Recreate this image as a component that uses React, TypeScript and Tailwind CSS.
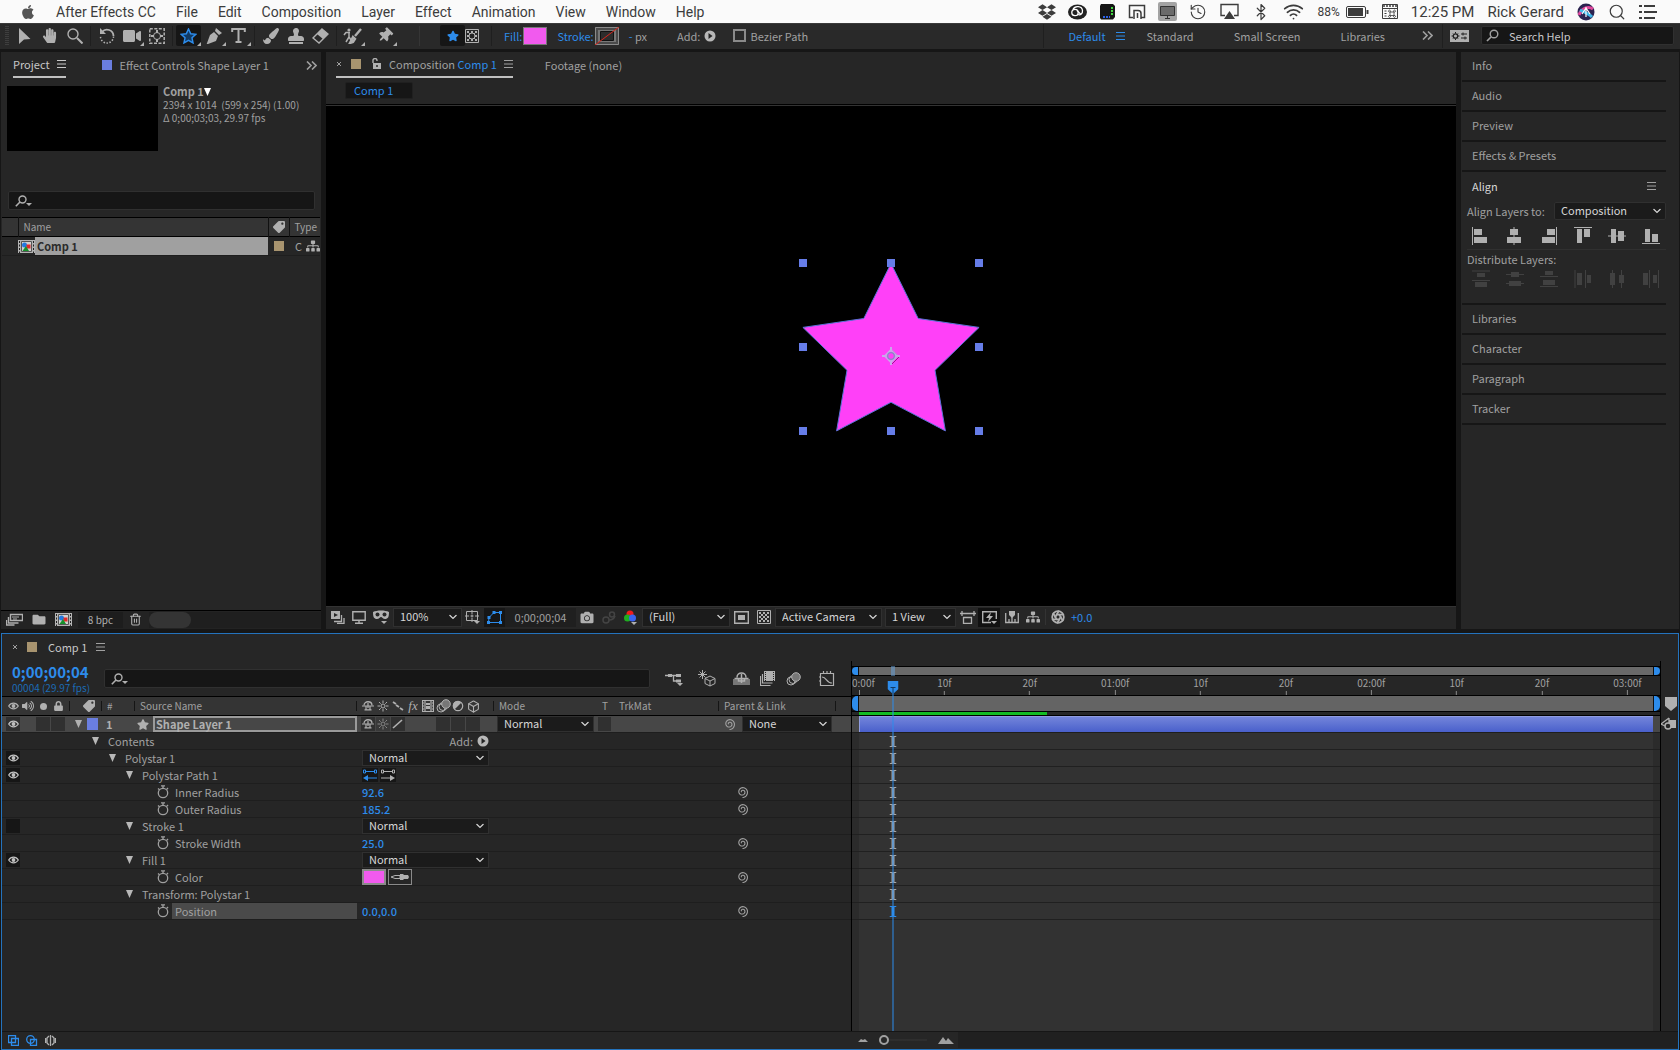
import React from 'react';
import clsx from 'clsx';
import {
  FaApple, FaDropbox, FaFolder, FaCamera, FaSitemap, FaLock, FaTag, FaVolumeUp,
  FaHandPaper, FaPaintBrush, FaStamp, FaStar, FaThumbtack, FaVideo,
} from 'react-icons/fa';
import { History, Bluetooth, Wifi, Search, Trash2, Aperture, Box } from 'lucide-react';

type GlyphProps = { w?: number; h?: number; className?: string; children: React.ReactNode };

// Every hand drawn icon uses its pixel size as its view box
function Glyph({ w = 16, h = 16, className, children }: GlyphProps) {
  return (
    <svg width={w} height={h} viewBox={`0 0 ${w} ${h}`} fill="none" stroke="currentColor" className={clsx('shrink-0', className)} aria-hidden="true">
      {children}
    </svg>
  );
}

const MenuLines = ({ className }: { className?: string }) => (
  <Glyph w={9} h={8} className={className}><path d="M0 .5h9M0 4h9M0 7.5h9" /></Glyph>
);

const Chevrons = () => (
  <Glyph w={11} h={9}><path d="M1 .5l4 4-4 4M6 .5l4 4-4 4" strokeWidth="1.6" /></Glyph>
);

const CloseX = () => <Glyph w={6} h={6}><path d="M1 1l4 4M5 1L1 5" /></Glyph>;

const Chevron = () => (
  <Glyph w={8} h={5} className="absolute right-1 top-1/2 -translate-y-1/2 pointer-events-none">
    <path d="M.5.5L4 4 7.5.5" strokeWidth="1.2" />
  </Glyph>
);

const Triangle = ({ className }: { className?: string }) => (
  <Glyph w={7} h={8} className={className}><path d="M0 0h7L3.500 8z" fill="currentColor" stroke="none" /></Glyph>
);

const PlayDot = () => (
  <Glyph w={12} h={12} className="text-[#b8b8b8]">
    <circle cx="6" cy="6" r="5.500" fill="currentColor" stroke="none" />
    <path d="M4.500 3l4 3-4 3z" fill="#262626" stroke="none" />
  </Glyph>
);

const SearchDrop = () => (
  <Glyph w={17} h={12} className="text-[#b0b0b0]">
    <circle cx="7.500" cy="4.500" r="3.500" strokeWidth="1.400" />
    <path d="M5 7L.8 11.200" strokeWidth="1.600" />
    <path d="M11 8h6l-3 3z" fill="currentColor" stroke="none" />
  </Glyph>
);

const Stopwatch = () => (
  <Glyph w={12} h={14}>
    <circle cx="6" cy="8" r="4.700" strokeWidth="1.300" />
    <path d="M6 3V1M4 .8h4M1 3.500l1.500 1.200M11 3L9.800 4.300" strokeWidth="1.300" />
  </Glyph>
);

const spiralPath = Array.from({ length: 45 }, (_, i) => {
  const t = i / 44;
  const a = Math.PI * (0.9 + 3.6 * t);
  const r = 1 + 4.6 * t;
  return `${i ? 'L' : 'M'}${(6.5 + r * Math.cos(a)).toFixed(2)} ${(6 + r * Math.sin(a)).toFixed(2)}`;
}).join('');

const Spiral = () => (
  <Glyph w={13} h={12}><path d={spiralPath} strokeWidth="1.100" /></Glyph>
);

const Eye = () => (
  <Glyph w={11} h={8}>
    <path d="M.7 4C3 .2 8 .2 10.300 4 8 7.800 3 7.800.7 4z" strokeWidth="1.200" />
    <circle cx="5.500" cy="4" r="1.900" fill="currentColor" stroke="none" />
  </Glyph>
);

const Shy = () => (
  <Glyph w={12} h={12}>
    <path d="M2 5.500C2 .5 10 .5 10 5.500" strokeWidth="1.300" />
    <path d="M0 6h12M6 3v5M4 6v3.500M8 6v3.500M2.500 9.800h7" strokeWidth="1.200" />
  </Glyph>
);

const Sun = () => (
  <Glyph w={12} h={12}>
    <circle cx="6" cy="6" r="2" />
    <path d="M6 .5V3M6 9v2.500M.5 6H3M9 6h2.500M2 2l1.700 1.700M8.300 8.300L10 10M10 2L8.300 3.700M3.700 8.300L2 10" />
  </Glyph>
);

const Film = () => (
  <Glyph w={12} h={12}>
    <path d="M.5.5h11v11H.5zM3 .5v11M9 .5v11" strokeWidth="1.200" />
    <path d="M1 3h1M1 6h1M1 9h1M10 3h1M10 6h1M10 9h1" />
    <path d="M4 3h4v2H4zM4 6h4v3H4z" fill="currentColor" stroke="none" />
  </Glyph>
);

const MotionBlur = () => (
  <Glyph w={15} h={14}>
    <circle cx="5" cy="9" r="4" />
    <circle cx="7" cy="7.500" r="4" />
    <circle cx="10" cy="5" r="4.300" fill="#777" />
  </Glyph>
);

const Halved = () => (
  <Glyph w={12} h={12}>
    <circle cx="6" cy="6" r="4.700" strokeWidth="1.200" />
    <path d="M9.300 2.700A4.700 4.700 0 1 0 2.700 9.300z" fill="currentColor" stroke="none" />
  </Glyph>
);

const CompIcon = () => (
  <Glyph w={17} h={13}>
    <path d="M0 0h17v13H0z" fill="#b4b4b4" stroke="none" />
    <path d="M1.500 1v12M15.500 1v12" stroke="#222" strokeDasharray="2 1.500" />
    <path d="M3.500 1.500h10v10h-10z" fill="#d0d0d0" stroke="#555" />
    <circle cx="6.500" cy="5" r="2.500" fill="#2379e0" stroke="none" />
    <path d="M8.500 4.500h4v4h-4z" fill="#e02a2a" stroke="none" />
    <path d="M4.500 11l3.500-5 3 5z" fill="#17902a" stroke="none" />
  </Glyph>
);

const Checker = ({ hole }: { hole?: boolean }) => (
  <Glyph w={14} h={14}>
    <path d="M.5.500h13v13H.5z" />
    <path d="M2 3h10M2 7h10M2 11h10" strokeWidth="2" strokeDasharray="2 2" />
    <path d="M4 5h8M4 9h8" strokeWidth="2" strokeDasharray="2 2" />
    {hole && <circle cx="7" cy="7" r="3" fill="#222" />}
  </Glyph>
);

type SelectProps = { label: string; value: string; className?: string };

// The select is taller than its frame so that the font's tall line box is not clipped
function Select({ label, value, className }: SelectProps) {
  return (
    <div className={clsx('relative bg-[#1b1b1b] border border-[#303030] text-[#d6d6d6]', className)}>
      <select aria-label={label} defaultValue={value} className="w-full h-[calc(100%+4px)] -mt-[3px] pl-[6px] appearance-none bg-transparent outline-none block">
        <option>{value}</option>
      </select>
      <Chevron />
    </div>
  );
}

function Tool({ label, active, corner, children }: { label: string; active?: boolean; corner?: boolean; children: React.ReactNode }) {
  return (
    <button
      type="button"
      aria-label={label}
      className={clsx('relative w-[25px] h-[21px] flex items-center justify-center rounded-xs', active && 'bg-[#161616] text-[#2d8ceb]')}
    >
      {children}
      {corner && (
        <Glyph w={4} h={4} className="absolute right-0 bottom-0 text-[#b0b0b0]">
          <path d="M4 0v4H0z" fill="currentColor" stroke="none" />
        </Glyph>
      )}
    </button>
  );
}

const ToolSep = () => <div className="w-px h-5 mx-[3px] bg-[#1f1f1f]" />;

const menus = ['File', 'Edit', 'Composition', 'Layer', 'Effect', 'Animation', 'View', 'Window', 'Help'];

function MenuBar() {
  return (
    <header className="h-[23px] flex items-center justify-between pl-5 pr-[23px] bg-[#fafafa] text-[#3c3c3c] text-[14px] font-[family-name:Roboto,sans-serif]">
      <nav className="flex items-center gap-5">
        <FaApple className="w-4 h-4 text-[#555]" />
        <button type="button">After Effects CC</button>
        {menus.map((m) => <button type="button" key={m}>{m}</button>)}
      </nav>
      <div className="flex items-center gap-[13px]">
        <div className="flex items-center gap-3">
          <FaDropbox className="w-[18px] h-[18px]" />
          <Glyph w={19} h={16}>
            <ellipse cx="9.500" cy="8" rx="9.500" ry="7.500" fill="#222" stroke="none" />
            <circle cx="7" cy="8.500" r="3.200" stroke="#fff" strokeWidth="1.300" />
            <path d="M9 6.500l4 4M5 5.500c2-4.500 9-3.500 9.500 1 .3 3-2 5-4.500 4" stroke="#fff" strokeWidth="1.300" />
          </Glyph>
          <Glyph w={17} h={17}>
            <path d="M2 1h12l2 2v11l-2 2.500H2L1 15V3z" fill="#151515" stroke="none" />
            <path d="M13 4v9" stroke="#42d640" strokeWidth="2" strokeDasharray="2 1" />
            <path d="M4 14h7" stroke="#2c63e8" strokeWidth="2" strokeDasharray="2 1" />
          </Glyph>
          <Glyph w={18} h={16}>
            <path d="M5 13.500H1.500v-12h15v12H13M6 15V6.500h4c2 0 3 1 3 3V15M9.500 9v5" strokeWidth="1.500" />
          </Glyph>
          <Glyph w={19} h={19}>
            <rect width="19" height="19" rx="2" fill="#a3a3a3" stroke="none" />
            <path d="M2.500 4.500h14v9h-14z" fill="#6b6b6b" stroke="#333" />
            <path d="M7 16.500h5M9.500 14v2" stroke="#333" />
          </Glyph>
          <History size={18} strokeWidth={1.500} />
        </div>
        <Glyph w={19} h={17}>
          <path d="M5 12.500H1v-11h17v11h-4" strokeWidth="1.400" />
          <path d="M9.500 8l5.500 8H4z" fill="currentColor" stroke="none" />
        </Glyph>
        <Bluetooth size={18} strokeWidth={1.600} />
        <Wifi size={21} strokeWidth={2} />
        <div className="flex items-center gap-[6px]">
          <span className="text-[12px]">88%</span>
          <Glyph w={23} h={12}>
            <rect x=".5" y=".5" width="19" height="11" rx="1.500" />
            <path d="M2 2h15v8H2z" fill="currentColor" stroke="none" />
            <path d="M21.500 4v4" strokeWidth="2" />
          </Glyph>
        </div>
        <Glyph w={16} h={15}>
          <path d="M.5.500h15v14H.5z" />
          <path d="M1 2h14" strokeWidth="1.500" strokeDasharray="2 1" />
          <path d="M1 4.500h14M2.500 7h2M2.500 9.500h2M2.500 12h2" />
          <path d="M8 8h4v3.500H8zM8 8a1 1 0 1 0-1 0h1M12 8a1 1 0 1 1 1 0h-1M8 11.500a1 1 0 1 1-1 0h1M12 11.500a1 1 0 1 0 1 0h-1" strokeWidth=".8" />
        </Glyph>
        <span className="text-[15px]">12:25 PM</span>
        <span className="text-[15px]">Rick Gerard</span>
        <Glyph w={18} h={18}>
          <circle cx="9" cy="9" r="8.500" fill="#2b2350" stroke="none" />
          <path d="M2 12c3-8 10-9 14-6" stroke="#e0489c" strokeWidth="3" />
          <path d="M3 7c4 2 9 4 12 7" stroke="#3fb8e8" strokeWidth="3" />
          <path d="M9 4v10M9 5L5 11M9 5l4 6" stroke="#fff" strokeWidth="1.200" />
        </Glyph>
        <Search size={18} strokeWidth={1.600} />
        <Glyph w={18} h={14}>
          <path d="M0 1h3M5 1h11M0 7h3M5 7h13M0 13h3M5 13h11" strokeWidth="1.800" />
        </Glyph>
      </div>
    </header>
  );
}

function Toolbar() {
  return (
    <div className="h-[26px] flex items-center pb-[2px] bg-[#292929] border-t border-[#3a3a3a] pl-[5px] pr-[6px] text-[#b0b0b0]">
      <Glyph w={4} h={20} className="mr-[3px] text-[#555]"><path d="M1 0v20M3 0v20" strokeDasharray="1 1" /></Glyph>
      <Tool label="Selection"><Glyph w={13} h={16}><path d="M1 0l11.500 11-6.500.5L1 16z" fill="currentColor" stroke="none" /></Glyph></Tool>
      <Tool label="Hand"><FaHandPaper className="w-[15px] h-[15px]" /></Tool>
      <Tool label="Zoom"><Glyph><circle cx="6" cy="6" r="5" strokeWidth="1.400" /><path d="M10 10l5.500 5.500" strokeWidth="2" /></Glyph></Tool>
      <ToolSep />
      <Tool label="Rotation">
        <Glyph><path d="M3 4a6.500 6.500 0 0 1 11.500 4" strokeWidth="1.800" /><path d="M14.500 8.500a6.500 6.500 0 1 1-13 0" strokeWidth="1.500" strokeDasharray="1.500 1.500" /><path d="M1 0v6h6z" fill="currentColor" stroke="none" /></Glyph>
      </Tool>
      <Tool label="Camera" corner><FaVideo className="w-[18px] h-4" /></Tool>
      <Tool label="Pan Behind">
        <Glyph><path d="M.8.800h14.400v14.400H.8z" strokeWidth="1.500" strokeDasharray="3 1.500" /><circle cx="8" cy="8" r="3.500" /><path d="M8 2v3M8 11v3M2 8h3M11 8h3" strokeWidth="2" /></Glyph>
      </Tool>
      <ToolSep />
      <Tool label="Star" active corner>
        <Glyph w={17} h={16}><path d="M8.500 1l2.200 4.700 5.100.6-3.800 3.500 1 5.100-4.500-2.500L4 14.900l1-5.100L1.200 6.300l5.100-.6z" fill="#123a63" strokeWidth="1.500" /></Glyph>
      </Tool>
      <Tool label="Pen" corner>
        <Glyph><path d="M10 0l6 5-3 2-4-4zM8 4l4 4-2 5-8 3-1-1 5-5a1.500 1.500 0 1 1 1 1l-5 5-1.500.5L4 7z" fill="currentColor" stroke="none" /></Glyph>
      </Tool>
      <Tool label="Type" corner>
        <Glyph w={15} h={15}><path d="M1.200 4V1h12.600v3M7.500 1v13M4.500 14h6" strokeWidth="2" /></Glyph>
      </Tool>
      <ToolSep />
      <Tool label="Brush"><FaPaintBrush className="w-4 h-4" /></Tool>
      <Tool label="Clone Stamp"><FaStamp className="w-4 h-4" /></Tool>
      <Tool label="Eraser">
        <Glyph w={17} h={16}><path d="M10 1l6 5-9 9-6-5z" strokeWidth="1.400" /><path d="M10 1l6 5-5 5-6-5z" fill="currentColor" stroke="none" /></Glyph>
      </Tool>
      <ToolSep />
      <Tool label="Roto Brush" corner>
        <Glyph w={19} h={16}><circle cx="6" cy="2" r="1.600" fill="currentColor" stroke="none" /><path d="M6 4v5l-3 5M6 9l2 3M1 7l2-2.500h4" strokeWidth="1.500" /><path d="M18 1l-6 7M10 9l2 2-2 3-3 1z" strokeWidth="2.400" /></Glyph>
      </Tool>
      <div className="w-[7px]" />
      <Tool label="Puppet Pin" corner><FaThumbtack className="w-[14px] h-[15px] rotate-45" /></Tool>
      <div className="w-px h-5 ml-[22px] mr-5 bg-[#353535]" />
      <Tool label="Tool Creates Shape" active><FaStar className="w-3 h-3" /></Tool>
      <div className="-ml-[6px]"><Tool label="Tool Creates Mask"><Checker hole /></Tool></div>
      <div className="w-px h-5 ml-[7px] mr-3 bg-[#1f1f1f]" />

      <div className="flex items-center text-[#2d8ceb]">
        <button type="button">Fill:</button>
        <button type="button" aria-label="Fill color" className="w-6 h-[18px] ml-px bg-[#f15aee] border border-[#777]" />
        <button type="button" className="ml-[10px]">Stroke:</button>
        <button type="button" aria-label="Stroke color" className="ml-px">
          <Glyph w={24} h={18}>
            <path d="M0 0h24v18H0z" fill="#777" stroke="none" />
            <path d="M1.500 1.500h21v15h-21z" stroke="#4a4a4a" strokeWidth="3" />
            <path d="M.5.500h23v17H.5z" stroke="#8a8a8a" />
            <path d="M5.500 4.500h13v9h-13z" fill="#2c2c2c" stroke="#111" />
            <path d="M0 18L24 0" stroke="#d8261c" />
          </Glyph>
        </button>
        <span className="ml-[10px]">- <span className="text-[#a0a0a0]">px</span></span>
      </div>
      <button type="button" className="flex items-center gap-1 ml-[30px] text-[#a0a0a0]">Add: <PlayDot /></button>
      <label className="flex items-center gap-1 ml-[17px] text-[#a0a0a0]">
        <input type="checkbox" className="appearance-none w-[13px] h-[13px] border-2 border-[#8a8a8a]" />
        Bezier Path
      </label>

      <div className="ml-auto flex items-center text-[#a0a0a0]">
        <div className="w-px h-6 bg-[#1f1f1f] mr-6" />
        <button type="button" className="flex items-center gap-[10px] text-[#2d8ceb]">Default <MenuLines /></button>
        <button type="button" className="ml-[22px]">Standard</button>
        <button type="button" className="ml-10">Small Screen</button>
        <button type="button" className="ml-10">Libraries</button>
        <button type="button" aria-label="More workspaces" className="ml-[37px]"><Chevrons /></button>
        <div className="w-px h-6 bg-[#1f1f1f] ml-[9px] mr-[7px]" />
        <button type="button" aria-label="Workspace settings">
          <Glyph w={19} h={12}>
            <path d="M0 0h19v12H0z" fill="#b0b0b0" stroke="none" />
            <circle cx="5.500" cy="6" r="2.200" stroke="#222" strokeWidth="1.300" />
            <path d="M5.500 2v1.500M5.500 8.500V10M1.500 6H3M8 6h1.500M3 3.500l1 1M7 7.500l1 1M8 3.500l-1 1M4 7.500l-1 1" stroke="#222" />
            <path d="M11 4h6M11 8h6M13 2.500v3M15 6.500v3" stroke="#222" />
          </Glyph>
        </button>
        <label className="flex items-center w-[193px] h-[19px] ml-3 pl-1 bg-[#161616] border border-[#303030] rounded-xs">
          <Glyph w={13} h={13}><circle cx="8" cy="5" r="3.800" strokeWidth="1.400" /><path d="M5 8l-4 4" strokeWidth="1.700" /></Glyph>
          <input aria-label="Search Help" placeholder="Search Help" className="flex-1 min-w-0 ml-[10px] bg-transparent outline-none placeholder:text-[#c8c8c8]" />
        </label>
      </div>
    </div>
  );
}

function ProjectPanel() {
  return (
    <section className="w-[320px] shrink-0 flex flex-col bg-[#262626]">
      <div className="h-[29px] flex items-start pl-3 pr-1">
        <button type="button" className="h-[26px] flex items-center gap-[7px] border-b-2 border-[#c0c0c0] text-[#c8c8c8]">Project <MenuLines /></button>
        <button type="button" className="h-[26px] flex items-center gap-2 ml-9"><span className="w-[10px] h-[10px] bg-[#6a7ee0]" />Effect Controls Shape Layer 1</button>
        <button type="button" aria-label="More panels" className="h-[26px] ml-auto"><Chevrons /></button>
      </div>

      <div className="flex pt-[5px] pl-[6px]">
        <div className="w-[151px] h-[65px] bg-black" />
        <div className="ml-[5px] -mt-px text-[10px] leading-[13px] whitespace-pre">
          <div className="flex items-center gap-[2px] font-bold text-[11px]">Comp 1 <Triangle className="text-white -ml-1" /></div>
          <div>2394 x 1014  (599 x 254) (1.00)</div>
          <div>Δ 0;00;03;03, 29.97 fps</div>
        </div>
      </div>

      <label className="h-[19px] mt-10 ml-[7px] mr-[6px] flex items-center pl-[6px] bg-[#161616] border border-[#303030] rounded-xs">
        <SearchDrop />
        <input aria-label="Search project" className="flex-1 min-w-0 bg-transparent outline-none" />
      </label>

      <table className="mt-[7px] mx-px table-fixed border-collapse text-left">
        <thead className="bg-[#343434] border-y border-black text-[10px]">
          <tr className="h-[19px]">
            <th className="w-4" />
            <th className="font-normal border-l border-[#111] pl-[5px]">Name</th>
            <th className="w-[21px] border-l border-[#111]"><FaTag className="w-3 h-3 mx-auto -scale-x-100 text-[#b0b0b0]" /></th>
            <th className="w-[31px] font-normal border-l border-[#111] pl-[5px]">Type</th>
          </tr>
        </thead>
        <tbody>
          <tr className="h-[18px] border-b border-[#1e1e1e]">
            <td />
            <td className="p-0">
              <div className="flex items-center">
                <CompIcon />
                <span className="flex-1 h-[18px] leading-[18px] pl-[2px] bg-[#a0a0a0] text-[#2b2b2b] font-bold">Comp 1</span>
              </div>
            </td>
            <td><div className="w-[10px] h-[10px] mx-auto bg-[#a8946f]" /></td>
            <td><div className="flex items-center justify-between pl-[6px]"><span className="w-[7px] overflow-hidden">C</span><FaSitemap className="w-[14px] h-3 text-[#b0b0b0]" /></div></td>
          </tr>
        </tbody>
      </table>

      <div className="mt-auto h-[19px] pb-px border-t border-black flex items-center pl-[5px] text-[#b0b0b0] bg-[#232323]">
        <button type="button" aria-label="Interpret footage">
          <Glyph w={17} h={13}><path d="M4.500 1.500h12v6h-12zM2.500 4v6h10M.5 7v5h8" strokeWidth="1.400" /><path d="M6 4h7M7 6h4" /></Glyph>
        </button>
        <button type="button" aria-label="New folder" className="ml-[9px]"><FaFolder className="w-[14px] h-[13px]" /></button>
        <button type="button" aria-label="New composition" className="ml-[9px]"><CompIcon /></button>
        <button type="button" className="w-[45px] h-4 leading-4 ml-[6px] bg-[#1d1d1d] text-[10px]">8 bpc</button>
        <button type="button" aria-label="Delete" className="ml-[6px]"><Trash2 size={13} strokeWidth={2} /></button>
        <div className="flex-1 ml-[7px] h-4 bg-[#1f1f1f]"><div className="w-[42px] h-4 rounded-full bg-[#343434]" /></div>
      </div>
    </section>
  );
}

const starPoints = Array.from({ length: 10 }, (_, i) => {
  const r = i % 2 ? 46.3 : 92.6;
  const a = ((i * 36 - 90) * Math.PI) / 180;
  return `${(100 + r * Math.cos(a)).toFixed(1)},${(100 + r * Math.sin(a)).toFixed(1)}`;
}).join(' ');

const handles = [[12, 7], [100, 7], [188, 7], [12, 91], [188, 91], [12, 175], [100, 175], [188, 175]];

function Viewer() {
  return (
    <section className="flex-1 min-w-0 flex flex-col bg-[#262626]">
      <div className="h-[29px] flex items-start pl-[10px]">
        <div className="h-[26px] flex items-center border-b-2 border-[#c0c0c0]">
          <button type="button" aria-label="Close composition"><CloseX /></button>
          <span className="w-[10px] h-[10px] ml-[9px] mr-[10px] bg-[#a8946f]" />
          <Glyph w={11} h={12} className="text-[#b0b0b0]"><path d="M2 5V2.500a2 2 0 0 1 4 0V3" strokeWidth="1.400" /><path d="M2 5h8v6H2z" fill="currentColor" stroke="none" /><path d="M6 7v2" stroke="#262626" strokeWidth="1.500" /></Glyph>
          <span className="ml-[7px] mr-[7px]">Composition <span className="text-[#2d8ceb]">Comp 1</span></span>
          <MenuLines />
        </div>
        <button type="button" className="h-[26px] ml-8">Footage (none)</button>
      </div>
      <div className="h-6 flex items-start pt-px pl-[19px] border-b border-black">
        <button type="button" className="w-[68px] h-[17px] leading-[15px] pl-2 text-left bg-[#161616] border border-[#202020] rounded-xs text-[#2d8ceb]">Comp 1</button>
      </div>
      <div className="flex-1 min-h-[220px] flex items-center justify-center bg-black border-t border-[#333]">
        <Glyph w={200} h={200}>
          <polygon points={starPoints} fill="#ff40f8" stroke="#5b72d8" />
          {handles.map(([x, y]) => <rect key={`${x}-${y}`} x={x - 4} y={y - 4} width="8" height="8" fill="#667de8" stroke="none" />)}
          <path d="M101 94l7 7-7 7" stroke="#a01a90" />
          <path d="M100 94l6 6-6 6-6-6z" stroke="#c9a8ea" strokeWidth="2" />
          <circle cx="100" cy="100" r="3.300" stroke="#8c86c8" strokeWidth="1.300" />
          <path d="M100 91v3M100 106v3M91 100h3M106 100h3" stroke="#c9a8ea" strokeWidth="2" />
        </Glyph>
      </div>

      <div className="h-[23px] pb-[2px] flex items-center pl-[5px] border-t border-[#333] text-[#b0b0b0]">
        <Glyph w={14} h={13}><path d="M0 0h9v8H0z" fill="currentColor" stroke="none" /><path d="M3 2l4 2-4 2z" fill="#262626" stroke="none" /><path d="M3 10.500h7.500V4M6 12.500h7V7" strokeWidth="1.300" /></Glyph>
        <Glyph w={14} h={13} className="ml-[7px]"><path d="M.8.800h12.400v8.400H.8zM3 12.300h8M7 9v3" strokeWidth="1.400" /></Glyph>
        <Glyph w={16} h={14} className="ml-[7px]">
          <path d="M0 2c4-2 12-2 16 0 0 5-1 7-4 7-2 0-3-2-4-2S6 9 4 9C1 9 0 7 0 2z" fill="currentColor" stroke="none" />
          <circle cx="4.500" cy="4.500" r="2" fill="#262626" stroke="none" /><circle cx="11.500" cy="4.500" r="2" fill="#262626" stroke="none" />
          <path d="M8 11h6l-3 3z" fill="currentColor" stroke="none" />
        </Glyph>
        <Select label="Magnification" value="100%" className="w-[69px] h-[19px] ml-1" />
        <Glyph w={15} h={14} className="ml-[3px]"><path d="M1.500 1.500h11v9h-11zM7 0v4M7 8v4M0 6h4M10 6h4M5.500 6h3M7 4.500v3" /><path d="M9 11h6l-3 3z" fill="currentColor" stroke="none" /></Glyph>
        <button type="button" aria-label="Toggle mask visibility" className="w-[21px] h-[19px] ml-1 flex items-center justify-center bg-[#161616] text-[#2d8ceb]">
          <Glyph w={15} h={13}><path d="M1.500 11.500h12v-10H7l-5 5z" /><path d="M0 10h3v3H0zM12 10h3v3h-3zM12 0h3v3h-3zM5.500 0h3v3h-3zM.5 5h3v3h-3z" fill="currentColor" stroke="none" /></Glyph>
        </button>
        <button type="button" className="w-[71px] h-[19px] bg-[#1f1f1f] text-[#a0a0a0]">0;00;00;04</button>
        <FaCamera className="w-[14px] h-[13px] ml-1" />
        <Glyph w={14} h={13} className="ml-2 text-[#444]"><circle cx="4" cy="9" r="3" strokeWidth="1.500" /><circle cx="10" cy="3.500" r="2.500" strokeWidth="1.500" /><path d="M7 9c3 0 5-1 6-4" strokeWidth="1.500" /></Glyph>
        <Glyph w={13} h={15} className="ml-2">
          <circle cx="6" cy="4" r="3.500" fill="#f01b1b" stroke="none" /><circle cx="3.500" cy="8" r="3.500" fill="#1fae1f" stroke="none" /><circle cx="8.500" cy="8" r="3.500" fill="#3b63f0" stroke="none" />
          <path d="M7 12h6l-3 3z" fill="#b0b0b0" stroke="none" />
        </Glyph>
        <Select label="Resolution" value="(Full)" className="w-[88px] h-[19px] ml-[5px]" />
        <Glyph w={15} h={13} className="ml-1"><path d="M.7.700h13.600v11.600H.7z" strokeWidth="1.400" /><path d="M4 4h7v5H4z" fill="currentColor" stroke="none" /></Glyph>
        <span className="ml-2 mr-1"><Checker /></span>
        <Select label="Camera view" value="Active Camera" className="w-[107px] h-[19px]" />
        <Select label="View layout" value="1 View" className="w-[71px] h-[19px] ml-[3px]" />
        <Glyph w={16} h={13} className="ml-1"><path d="M0 2.500h16M2 0v5M14 0v5M3.500 6.500h8v6h-8z" strokeWidth="1.300" /></Glyph>
        <button type="button" aria-label="Fast previews" className="w-[22px] h-[19px] ml-[2px] flex items-center justify-center bg-[#111]">
          <Glyph w={15} h={13}><path d="M9 11.500H.7V.7h13.600V8" strokeWidth="1.400" /><path d="M9 1L4 7h3l-1 4 5-6H8zM9 10h6l-3 3z" fill="currentColor" stroke="none" /></Glyph>
        </button>
        <Glyph w={14} h={13} className="ml-[5px]"><path d="M.7 2v9.500h12.600V2M4 11V8M10 11V8M7 11V5" strokeWidth="1.300" /><path d="M4 0h6v4L7 7 4 4z" fill="currentColor" stroke="none" /></Glyph>
        <FaSitemap className="w-[14px] h-3 ml-[7px]" />
        <div className="w-px h-4 mx-[5px] bg-[#333]" />
        <Aperture size={14} strokeWidth={3} />
        <button type="button" className="ml-[6px] text-[#2d8ceb]">+0.0</button>
      </div>
    </section>
  );
}

const alignIcons = [
  { label: 'Align left', d: 'M.5 0v18', boxes: 'M2 2h8v6H2zM2 10h13v6H2z' },
  { label: 'Align horizontal centers', d: 'M8 0v18', boxes: 'M4 2h8v6H4zM1 10h14v6H1z' },
  { label: 'Align right', d: 'M16.500 0v18', boxes: 'M7 2h8v6H7zM2 10h13v6H2z' },
  { label: 'Align top', d: 'M0 .5h18', boxes: 'M3 2h5v14H3zM10 2h6v8h-6z' },
  { label: 'Align vertical centers', d: 'M0 9h18', boxes: 'M3 2h5v14H3zM10 4h6v10h-6z' },
  { label: 'Align bottom', d: 'M0 16.500h18', boxes: 'M3 2h5v13H3zM10 7h6v8h-6z' },
];

const distributeIcons = [
  { label: 'Distribute top', d: 'M0 1h18M0 10.500h18', boxes: 'M5 3h8v4H5zM3 12h12v5H3z' },
  { label: 'Distribute vertical centers', d: 'M0 4.500h18M0 13.500h18', boxes: 'M5 2h8v5H5zM3 11h12v5H3z' },
  { label: 'Distribute bottom', d: 'M0 6.500h18M0 16.500h18', boxes: 'M5 1h8v4H5zM3 10h12v5H3z' },
  { label: 'Distribute left', d: 'M1 0v18M11.500 0v18', boxes: 'M3 3h5v12H3zM13 5h4v8h-4z' },
  { label: 'Distribute horizontal centers', d: 'M4.500 0v18M13.500 0v18', boxes: 'M2 3h5v12H2zM11 5h5v8h-5z' },
  { label: 'Distribute right', d: 'M7.500 0v18M16.500 0v18', boxes: 'M1 3h5v12H1zM11 5h4v8h-4z' },
];

function SidePanel() {
  const item = 'h-[30px] w-full pl-[10px] pb-[2px] text-left flex items-center border-b-2 border-[#161616]';
  return (
    <aside className="w-[218px] shrink-0 pl-px pr-[13px] bg-[#262626]">
      {['Info', 'Audio', 'Preview', 'Effects & Presets'].map((t) => <button type="button" key={t} className={item}>{t}</button>)}
      <div className="h-[133px] border-b-2 border-[#161616] pl-[5px]">
        <div className="h-[30px] pb-[2px] flex items-center justify-between pl-[5px] pr-[10px] text-[#d6d6d6]">Align <MenuLines className="text-[#a0a0a0]" /></div>
        <div className="flex items-center justify-between">
          <span>Align Layers to:</span>
          <Select label="Align layers to" value="Composition" className="w-[112px] h-[18px] rounded-xs" />
        </div>
        <div className="flex justify-between pt-[7px] pb-1 pl-[5px] pr-[6px] border-b border-[#303030] text-[#b0b0b0]">
          {alignIcons.map((i) => (
            <button type="button" key={i.label} aria-label={i.label}>
              <Glyph w={18} h={18}><path d={i.d} /><path d={i.boxes} fill="currentColor" stroke="none" /></Glyph>
            </button>
          ))}
        </div>
        <div className="h-5 leading-[18px]">Distribute Layers:</div>
        <div className="flex justify-between pl-[5px] pr-[6px] text-[#414141]">
          {distributeIcons.map((i) => (
            <button type="button" key={i.label} aria-label={i.label} disabled>
              <Glyph w={18} h={18}><path d={i.d} /><path d={i.boxes} fill="currentColor" stroke="none" /></Glyph>
            </button>
          ))}
        </div>
      </div>
      {['Libraries', 'Character', 'Paragraph', 'Tracker'].map((t) => <button type="button" key={t} className={item}>{t}</button>)}
    </aside>
  );
}

type Row = {
  name: string;
  pad: string;
  prop?: boolean;
  eye?: 'on' | 'off';
  kind?: 'add' | 'mode' | 'direction' | 'swatch';
  value?: string;
  selected?: boolean;
};

const rows: Row[] = [
  { name: 'Contents', pad: 'pl-[23px]', kind: 'add' },
  { name: 'Polystar 1', pad: 'pl-[40px]', eye: 'on', kind: 'mode' },
  { name: 'Polystar Path 1', pad: 'pl-[57px]', eye: 'on', kind: 'direction' },
  { name: 'Inner Radius', pad: 'pl-[88px]', prop: true, value: '92.6' },
  { name: 'Outer Radius', pad: 'pl-[88px]', prop: true, value: '185.2' },
  { name: 'Stroke 1', pad: 'pl-[57px]', eye: 'off', kind: 'mode' },
  { name: 'Stroke Width', pad: 'pl-[88px]', prop: true, value: '25.0' },
  { name: 'Fill 1', pad: 'pl-[57px]', eye: 'on', kind: 'mode' },
  { name: 'Color', pad: 'pl-[88px]', prop: true, kind: 'swatch' },
  { name: 'Transform: Polystar 1', pad: 'pl-[57px]' },
  { name: 'Position', pad: 'pl-[88px]', prop: true, value: '0.0,0.0', selected: true },
];

function RowControl({ row }: { row: Row }) {
  if (row.kind === 'add') {
    return <button type="button" className="ml-auto flex items-center gap-1">Add: <PlayDot /></button>;
  }
  if (row.kind === 'mode') {
    return <Select label={`${row.name} mode`} value="Normal" className="w-full h-4" />;
  }
  if (row.kind === 'direction') {
    return (
      <div className="flex gap-[2px]">
        <button type="button" aria-label="Reverse path" className="w-4 h-[14px] bg-[#161616] text-[#2d8ceb]">
          <Glyph w={16} h={12}><path d="M3 2.500h9M1.500 1h2v3h-2zM12.500 1h2v3h-2zM3 9h12" /><path d="M6 6v6L1 9z" fill="currentColor" stroke="none" /></Glyph>
        </button>
        <button type="button" aria-label="Forward path" className="w-4 h-[14px] bg-[#161616] text-[#b0b0b0]">
          <Glyph w={16} h={12}><path d="M3 2.500h9M1.500 1h2v3h-2zM12.500 1h2v3h-2zM1 9h12" /><path d="M10 6v6l5-3z" fill="currentColor" stroke="none" /></Glyph>
        </button>
      </div>
    );
  }
  if (row.kind === 'swatch') {
    return (
      <div className="flex gap-[2px]">
        <button type="button" aria-label="Fill color" className="w-6 h-4 bg-[#f15aee] border-2 border-[#8a8a8a]" />
        <button type="button" aria-label="Eyedropper" className="w-6 h-4 border border-[#8a8a8a] flex items-center justify-center">
          <Glyph w={20} h={8} className="text-[#b0b0b0]"><path d="M1 4l4-1.500h5v3H5z" /><path d="M10 1h3l1 1h4l1 2-1 2h-4l-1 1h-3z" fill="currentColor" stroke="none" /></Glyph>
        </button>
      </div>
    );
  }
  return <button type="button" className="font-medium text-[#2d8ceb]">{row.value}</button>;
}

function OutlineRow({ row }: { row: Row }) {
  return (
    <div className="h-[17px] flex items-center border-b border-[#1e1e1e]">
      <div className="w-[67px] pl-1 shrink-0">
        {row.eye && (
          <button type="button" aria-label={`${row.name} visibility`} className="w-[14px] h-[14px] flex items-center justify-center bg-[#161616] text-[#c0c0c0]">
            {row.eye === 'on' && <Eye />}
          </button>
        )}
      </div>
      <div className={clsx('w-[288px] h-full shrink-0 flex items-center', row.pad)}>
        {row.prop ? <Stopwatch /> : <Triangle className="text-[#b8b8b8]" />}
        <span className={clsx('flex-1 h-4 leading-4', row.prop ? 'ml-[3px] pl-[3px]' : 'ml-[9px]', row.selected && 'bg-[#4a4a4a]')}>{row.name}</span>
      </div>
      <div className="w-[132px] pl-[5px] shrink-0 flex items-center"><RowControl row={row} /></div>
      {row.prop && <button type="button" aria-label={`${row.name} pick whip`} className="ml-[247px]"><Spiral /></button>}
    </div>
  );
}

const Cell = ({ box, children }: { box?: boolean; children?: React.ReactNode }) => (
  <span className={clsx('w-[15px] h-[14px] shrink-0 flex items-center justify-center bg-clip-content pr-px', box && 'bg-[#303030]')}>{children}</span>
);

function Outline() {
  const head = 'h-[10px] flex items-center border-l border-[#151515] shrink-0';
  return (
    <div className="w-[849px] shrink-0 flex flex-col">
      <div className="h-[35px] flex items-center pl-[10px]">
        <div className="w-[92px] text-[#2d8ceb]">
          <div className="text-[15px] leading-[18px] font-bold">0;00;00;04</div>
          <div className="text-[10px] leading-[14px] text-[#1c6bb5]">00004 (29.97 fps)</div>
        </div>
        <label className="w-[546px] h-[19px] flex items-center pl-[6px] bg-[#161616] border border-[#303030] rounded-xs">
          <SearchDrop />
          <input aria-label="Search timeline" className="flex-1 min-w-0 bg-transparent outline-none" />
        </label>
        <div className="flex items-center ml-[15px] text-[#b0b0b0]">
          <Glyph w={18} h={14}><path d="M0 3.500h7M7 3.500h4M8.500 3v6H12" strokeWidth="1.300" /><path d="M3 2h4v3H3zM11 2h5v3h-5zM11 7.500h5v3h-5zM12 11h6l-3 3z" fill="currentColor" stroke="none" /></Glyph>
          <Glyph w={18} h={17} className="ml-[15px]"><path d="M12 6l5 2.500v5L12 16l-5-2.500v-5zM7 8.500l5 2.500 5-2.500M12 11v5M4.500 0v9M0 4.500h9M1.500 1.500l6 6M7.500 1.500l-6 6" /></Glyph>
          <Glyph w={17} h={15} className="ml-[17px]"><path d="M0 8h17v6H0z" fill="#777" stroke="none" /><path d="M1.500 7.500h14M4 6.500c0-6 9-6 9 0" strokeWidth="1.500" /><path d="M8.500 3v9M5.500 8v2h6V8" strokeWidth="1.500" /></Glyph>
          <Glyph w={15} h={15} className="ml-[10px]"><path d="M4 0h11v10H4z" fill="currentColor" stroke="none" /><path d="M5.500 1v9M13.500 1v9" stroke="#262626" strokeDasharray="1 1" /><path d="M2.500 3v9h10M.5 5v9.500h10" strokeWidth="1.200" /></Glyph>
          <span className="ml-[11px]"><MotionBlur /></span>
          <Glyph w={16} h={15} className="ml-[18px]"><path d="M1.500 2.500h13v12h-13zM3 6c5 0 4 6 10 6M4.500 0v2M8 0v2M11.500 0v2M0 6h1M0 10h1" strokeWidth="1.200" /></Glyph>
        </div>
      </div>

      <div className="h-5 flex items-center border-y border-black bg-[#343434] text-[10px]">
        <div className="w-[67px] pl-1 flex items-center text-[#b0b0b0]">
          <Cell><Eye /></Cell>
          <Cell><FaVolumeUp className="w-3 h-3" /></Cell>
          <Cell><span className="w-[7px] h-[7px] rounded-full bg-current" /></Cell>
          <Cell><FaLock className="w-[9px] h-[10px]" /></Cell>
        </div>
        <div className={clsx(head, 'w-8 pl-[13px] text-[#b0b0b0]')}><FaTag className="w-3 h-3 -scale-x-100" /></div>
        <div className={clsx(head, 'w-[33px] pl-[5px]')}>#</div>
        <div className={clsx(head, 'w-[222px] pl-[5px]')}>Source Name</div>
        <div className={clsx(head, 'w-[137px] pl-1 text-[#b0b0b0]')}>
          <Cell><Shy /></Cell>
          <Cell><Sun /></Cell>
          <Cell><Glyph w={12} h={12}><path d="M1 2l3 2M4 5l3 2M8 8l3 2" strokeWidth="1.800" /></Glyph></Cell>
          <Cell><span className="italic text-[13px] font-[family-name:Liberation_Serif,serif]">fx</span></Cell>
          <Cell><Film /></Cell>
          <Cell><MotionBlur /></Cell>
          <Cell><Halved /></Cell>
          <Cell><Box size={13} strokeWidth={2} /></Cell>
        </div>
        <div className={clsx(head, 'w-[225px] pl-[5px]')}>
          <span className="w-[103px]">Mode</span>
          <span className="w-[17px]">T</span>
          <span>TrkMat</span>
        </div>
        <div className={clsx(head, 'w-[117px] pl-[5px]')}>Parent &amp; Link</div>
        <div className={head} />
      </div>

      <div className="h-[17px] flex items-center bg-[#474747] border-b border-[#1e1e1e]">
        <div className="w-[67px] pl-1 flex items-center text-[#c0c0c0]">
          <Cell box><Eye /></Cell>
          <Cell />
          <Cell box />
          <Cell box />
        </div>
        <div className="w-[84px] pl-[6px] flex items-center text-[#b0b0b0]">
          <Triangle />
          <span className="w-[11px] h-3 ml-[5px] mr-2 bg-[#6a7ee0]" />
          <span className="w-[31px] leading-[15px] font-bold">1</span>
          <FaStar className="w-3 h-[11px] shrink-0" />
        </div>
        <button type="button" className="w-[204px] h-4 pl-px pb-px leading-[14px] flex items-center border-2 border-[#9a9a9a] text-[#b0b0b0] font-bold">Shape Layer 1</button>
        <div className="w-[140px] pl-1 flex items-center text-[#b0b0b0]">
          <Cell box><Shy /></Cell>
          <span className="opacity-60"><Cell box><Sun /></Cell></span>
          <Cell box><Glyph w={12} h={12}><path d="M1 10l9-8" strokeWidth="1.600" /></Glyph></Cell>
          <Cell />
          <Cell />
          <Cell box />
          <Cell box />
          <Cell box />
        </div>
        <Select label="Layer mode" value="Normal" className="w-[97px] h-4" />
        <span className="w-[13px] h-[14px] ml-1 bg-[#303030]" />
        <button type="button" aria-label="Parent pick whip" className="ml-[112px]"><Spiral /></button>
        <Select label="Parent layer" value="None" className="w-[90px] h-4 ml-[6px]" />
      </div>
      {rows.map((r) => <OutlineRow key={r.name} row={r} />)}
    </div>
  );
}

const totalFrames = 93;
const pct = (frame: number) => `${(frame / totalFrames) * 100}%`;
const marks = ['10f', '20f', '01:00f', '10f', '20f', '02:00f', '10f', '20f', '03:00f'];

const Grip = ({ side }: { side: 'left' | 'right' }) => (
  <span className={clsx('w-[6px] shrink-0 bg-[#2d8ceb]', side === 'left' ? 'rounded-l-[5px] mr-px' : 'rounded-r-[5px] ml-px')} />
);

function Tracks() {
  return (
    <div className="relative flex-1 min-w-0 flex flex-col border-x border-black overflow-hidden">
      <div className="h-[10px] mt-[5px] flex bg-[#111] border-y border-black shrink-0">
        <Grip side="left" /><div className="flex-1 bg-[#696969]" /><Grip side="right" />
      </div>
      <div className="relative h-[19px] mx-[7px] shrink-0 text-[10px] leading-[14px]">
        {/* The first label starts at the pane's edge, its tick stays on frame 0 */}
        <div className="h-full -ml-[7px] flex flex-col items-start justify-between">
          <span>0:00f</span>
          <span className="w-px h-[6px] ml-[7px] bg-[#8a8a8a]" />
        </div>
        {marks.map((m, i) => (
          <div key={i} className="absolute inset-y-0 flex flex-col items-center justify-between -translate-x-1/2" style={{ left: pct((i + 1) * 10) }}>
            <span>{m}</span>
            <span className={clsx('w-px bg-[#8a8a8a]', i % 3 === 2 ? 'h-[6px]' : 'h-1')} />
          </div>
        ))}
      </div>
      <div className="h-[17px] flex bg-[#111] border-y border-black shrink-0">
        <Grip side="left" /><div className="flex-1 bg-[#646464]" /><Grip side="right" />
      </div>
      <div className="h-1 px-[7px] border-b border-black shrink-0">
        <div className="h-full bg-[#14bc24]" style={{ width: pct(22) }} />
      </div>
      <div className="h-[17px] px-[7px] bg-[#474747] border-b border-[#1e1e1e] shrink-0">
        <div className="h-full bg-linear-to-b from-[#7384da] to-[#4a60cb] border-l border-t border-[#8f9ce0]" />
      </div>
      {rows.map((r) => (
        <div key={r.name} className="h-[17px] px-[7px] bg-[#2b2b2b] border-b border-[#202020] shrink-0"><div className="h-full bg-[#323232]" /></div>
      ))}
      <div className="flex-1 px-[7px] bg-[#2b2b2b] flex"><div className="flex-1 bg-[#323232]" /></div>

      {/* Current time indicator */}
      <div className="absolute inset-y-0 left-[7px] right-[7px] pointer-events-none">
        <div className="absolute inset-y-0 w-[11px] -translate-x-1/2 flex flex-col items-center pt-[5px] text-[#a6a6a6]" style={{ left: pct(4) }}>
          <div className="w-[3px] h-[10px] border-x border-[#6aa6e0]" />
          <Glyph w={11} h={13} className="mt-[5px] text-[#2d8ceb]"><path d="M0 0h11v8l-5.500 5L0 8z" fill="currentColor" stroke="none" /><path d="M3 6.500h5M5.500 6v6" stroke="#123a63" /></Glyph>
          <div className="h-[39px]" />
          {rows.map((r) => (
            <Glyph key={r.name} w={7} h={17} className={r.selected ? 'text-[#2d8ceb]' : undefined}>
              <path d="M0 3h3l.5.5.5-.5h3v1H5v9h2v1H4l-.5-.5-.5.5H0v-1h2V4H0z" fill="currentColor" stroke="none" />
            </Glyph>
          ))}
          <div className="absolute top-[33px] bottom-0 w-px bg-[#2d8ceb]" />
        </div>
      </div>
    </div>
  );
}

function Timeline() {
  return (
    <section className="flex flex-col bg-[#262626] border border-[#2473bd]">
      <div className="h-[27px] pb-[2px] flex items-center pl-[10px]">
        <button type="button" aria-label="Close timeline"><CloseX /></button>
        <span className="w-[10px] h-[10px] ml-[9px] mr-[11px] bg-[#a8946f]" />
        <span className="mr-[9px] text-[#c8c8c8]">Comp 1</span>
        <MenuLines />
      </div>
      <div className="flex min-h-[370px]">
        <Outline />
        <Tracks />
        <div className="w-[17px] shrink-0 pt-[35px] text-[#b0b0b0]">
          <Glyph w={12} h={15} className="ml-1"><path d="M0 1h12v9l-6 5-6-5z" fill="currentColor" stroke="none" /></Glyph>
          <Glyph w={15} h={14} className="mt-[6px]"><path d="M8 3h7v8H8z" fill="currentColor" stroke="none" /><path d="M8 1L0 7l4 2M8 1v6" strokeWidth="1.300" /><circle cx="7" cy="9" r="3" fill="#262626" strokeWidth="1.500" /></Glyph>
        </div>
      </div>
      <div className="h-[18px] pb-px flex items-center border-t border-[#161616] pl-[6px]">
        <div className="w-[850px] flex items-center gap-[7px] text-[#2d8ceb]">
          <Glyph w={11} h={11}><path d="M.5.500h7v7h-7zM3.500 3.500h7v7h-7z" strokeWidth="1.300" /></Glyph>
          <Glyph w={12} h={11}><circle cx="4.500" cy="4.500" r="3.800" strokeWidth="1.300" /><path d="M4.500 4.500h6v6h-6z" strokeWidth="1.300" /></Glyph>
          <Glyph w={11} h={11} className="text-[#b0b0b0]"><path d="M4 1L2 3v5l2 2M7 1l2 2v5l-2 2M.5 3v5M10.500 3v5M5.500 0v11" strokeWidth="1.300" /></Glyph>
        </div>
        <Glyph w={10} h={6}><path d="M0 5l3-3 2 1 2-1 3 3z" fill="currentColor" stroke="none" /></Glyph>
        <input
          type="range"
          aria-label="Timeline zoom"
          defaultValue={0}
          className="w-[48px] mx-[11px] h-3 appearance-none bg-linear-to-b from-transparent from-45% via-[#555] via-50% to-transparent to-55% [&::-webkit-slider-thumb]:appearance-none [&::-webkit-slider-thumb]:w-[10px] [&::-webkit-slider-thumb]:h-[10px] [&::-webkit-slider-thumb]:rounded-full [&::-webkit-slider-thumb]:border-2 [&::-webkit-slider-thumb]:border-[#a0a0a0] [&::-webkit-slider-thumb]:bg-[#262626]"
        />
        <Glyph w={16} h={8}><path d="M0 8l5-7 3 4 2-3 6 6z" fill="currentColor" stroke="none" /></Glyph>
        <div className="flex-1 self-stretch ml-1 bg-[#202020]" />
      </div>
    </section>
  );
}

export default function App() {
  return (
    <div className="min-h-screen min-w-[1400px] flex flex-col bg-[#161616] text-[#a0a0a0] text-[11px] leading-4 whitespace-nowrap font-[family-name:'Noto_Sans_CJK_SC',sans-serif]">
      <MenuBar />
      <Toolbar />
      <main className="flex-1 flex flex-col gap-1 pt-[3px] px-px">
        <div className="flex-1 flex gap-[5px]">
          <ProjectPanel />
          <Viewer />
          <SidePanel />
        </div>
        <Timeline />
      </main>
    </div>
  );
}
